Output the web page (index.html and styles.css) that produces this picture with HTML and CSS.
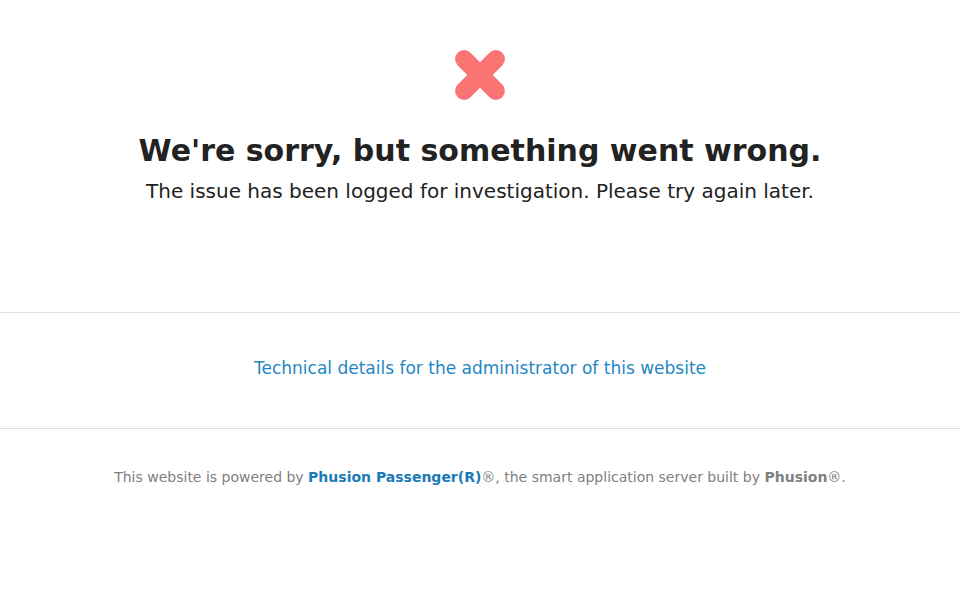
FILE: index.html
```html
<!DOCTYPE html>
<html>
<head>
<meta charset="utf-8">
<title>We're sorry, but something went wrong</title>
<link rel="stylesheet" href="styles.css">
</head>
<body>
<div class="page">
  <section class="top">
    <svg class="icon" width="50" height="50" viewBox="0 0 50 50" aria-hidden="true">
      <g fill="#fa7474">
        <rect x="-6.5" y="16" width="63" height="18" rx="9" transform="rotate(45 25 25)"/>
        <rect x="-6.5" y="16" width="63" height="18" rx="9" transform="rotate(-45 25 25)"/>
      </g>
    </svg>
    <h1 class="title">We're sorry, but something went wrong.</h1>
    <p class="subtitle">The issue has been logged for investigation. Please try again later.</p>
  </section>
  <section class="details">
    <a class="details-link" href="#">Technical details for the administrator of this website</a>
  </section>
  <footer class="footer">
    This website is powered by <a class="brand" href="#">Phusion Passenger(R)</a>®, the smart application server built by <b class="maker">Phusion</b>®.
  </footer>
</div>
</body>
</html>
```
FILE: styles.css
```css
html, body {
  margin: 0;
  padding: 0;
  background: #ffffff;
}
body {
  font-family: "DejaVu Sans", sans-serif;
  color: #222222;
}
.page {
  display: flex;
  flex-direction: column;
}
.top {
  display: flex;
  flex-direction: column;
  align-items: center;
  padding-top: 50px;
  height: 313px;
  box-sizing: border-box;
  border-bottom: 1px solid #dddddd;
}
.icon {
  display: block;
}
.title {
  margin: 32px 0 0;
  font-size: 30px;
  line-height: 38px;
  font-weight: bold;
  color: #222222;
}
.subtitle {
  margin: 8px 0 0;
  font-size: 20px;
  line-height: 26px;
  color: #222222;
}
.details {
  height: 116px;
  box-sizing: border-box;
  padding-bottom: 6px;
  display: flex;
  align-items: center;
  justify-content: center;
  border-bottom: 1px solid #dddddd;
}
.details-link {
  color: #1f87c2;
  text-decoration: none;
  font-size: 17px;
}
.footer {
  text-align: center;
  padding-top: 40px;
  font-size: 14px;
  color: #808080;
}
.brand {
  color: #1a7ab8;
  font-weight: bold;
  text-decoration: none;
}
.maker {
  font-weight: bold;
  color: #808080;
}
```
